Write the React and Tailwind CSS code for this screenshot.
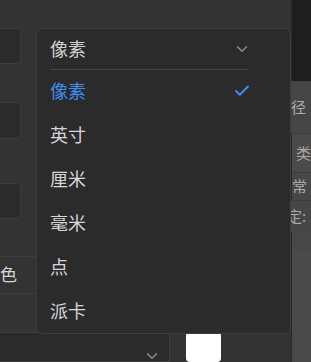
import React from "react";
import { ChevronDown, Check } from "lucide-react";

const units = ["像素", "英寸", "厘米", "毫米", "点", "派卡"];

const StubBox = ({ className = "" }) => (
  <div className={`w-[21px] h-[39px] bg-[#2b2b2b] border border-l-0 border-[#3d3d3d] rounded-r-[5px] ${className}`} />
);

export default function App() {
  const selected = "像素";

  return (
    <div
      className="w-[311px] h-[362px] overflow-hidden flex bg-[#333333] text-[#d6d6d6]"
      style={{ fontFamily: '"Noto Sans", "Noto Sans CJK SC", sans-serif' }}
    >
      {/* left panel with the open dropdown */}
      <div className="relative w-[291px] shrink-0 flex flex-col">
        <StubBox className="mt-[28px]" />
        <StubBox className="mt-[38px]" />
        <StubBox className="mt-[44px]" />

        {/* label row */}
        <div className="mt-[37px] h-[41px] border-y border-[#3d3d3d] flex items-center text-[17px] leading-none">
          色
        </div>

        <div className="mt-[35px] border-t border-[#3a3a3a] flex items-start gap-[16px] pt-[2px]">
          <div className="w-[170px] h-[30px] bg-[#2b2b2b] border border-l-0 border-[#3d3d3d] rounded-tr-[5px] flex justify-end pr-[8px] pt-[14px]">
            <ChevronDown className="w-[18px] h-[18px] text-[#8c8c8c]" strokeWidth={2} />
          </div>
          <div className="w-[35px] h-[30px] bg-white rounded-[4px]" />
        </div>

        {/* dropdown menu */}
        <div className="absolute left-[36px] top-[28px] w-[255px] h-[306px] bg-[#2b2b2b] border border-[#3e3e3e] rounded-[6px] flex flex-col">
          <div className="h-[40px] flex items-center justify-between pl-[13px] pr-[39px] text-[18px] leading-none">
            <span className="text-[#d0d0d0]">{selected}</span>
            <ChevronDown className="w-[18px] h-[18px] text-[#8c8c8c]" strokeWidth={2} />
          </div>
          <div className="ml-[13px] mr-[41px] h-px bg-[#444444]" />
          <div className="flex flex-col -mt-[1px]">
            {units.map((u) => (
              <div
                key={u}
                className={`h-[44px] flex items-center justify-between pl-[13px] pr-[39px] text-[18px] leading-none ${
                  u === selected ? "text-[#3d8ef0]" : "text-[#d6d6d6]"
                }`}
              >
                <span>{u}</span>
                {u === selected && <Check className="w-[18px] h-[18px] text-[#3d8ef0]" strokeWidth={2.5} />}
              </div>
            ))}
          </div>
        </div>
      </div>

      {/* right side panel, cut off */}
      <div className="flex-1 flex flex-col border-l border-[#2a2a2a] text-[15px] leading-none text-[#ababab]">
        <div className="h-[81px] bg-[#1e1e1e]" />
        <div className="h-[52px] bg-[#454545] flex items-center -ml-[1px]">径</div>
        <div className="h-[39px] bg-[#4a4a4a] border-t border-[#3c3c3c] flex items-center pl-[4px]">类</div>
        <div className="h-[28px] bg-[#474747] border-t border-[#3c3c3c] flex items-center">常</div>
        <div className="h-[32px] bg-[#464646] border-t border-[#3c3c3c] flex items-center -ml-[5px]">定:</div>
        <div className="h-[18px] bg-[#474747]" />
        <div className="flex-1 bg-[#4a4a4a]" />
      </div>
    </div>
  );
}
